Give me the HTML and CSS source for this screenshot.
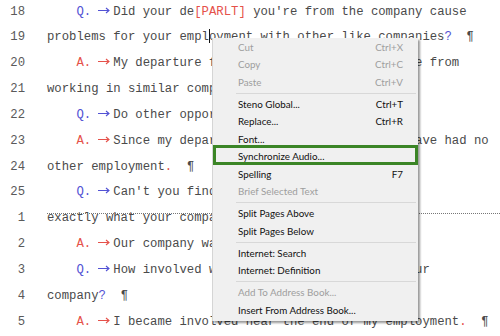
FILE: index.html
```html
<!DOCTYPE html>
<html lang="en">
<head>
    <meta charset="UTF-8">
    <title>Transcript Editor</title>
    <link rel="stylesheet" href="styles.css">
</head>
<body>
    <div class="doc">
        <div class="line"><span class="num">18</span><span class="txt">    <span class="q">Q. <span class="tab"><svg class="arrow" viewBox="0 0 12 7"><path d="M0 3.5h11M8 1l3 2.5-3 2.5"/></svg></span></span>Did your de<span class="red">[PARLT]</span> you're from the company cause</span></div>
        <div class="line"><span class="num">19</span><span class="txt">problems for your empl<span class="caret"></span>oyment with other like companies<span class="q">?</span>  ¶</span></div>
        <div class="line"><span class="num">20</span><span class="txt">    <span class="a">A. <span class="tab"><svg class="arrow" viewBox="0 0 12 7"><path d="M0 3.5h11M8 1l3 2.5-3 2.5"/></svg></span></span>My departure from this company has kept me from</span></div>
        <div class="line"><span class="num">21</span><span class="txt">working in similar companies.</span></div>
        <div class="line"><span class="num">22</span><span class="txt">    <span class="q">Q. <span class="tab"><svg class="arrow" viewBox="0 0 12 7"><path d="M0 3.5h11M8 1l3 2.5-3 2.5"/></svg></span></span>Do other opportunities exist?</span></div>
        <div class="line"><span class="num">23</span><span class="txt">    <span class="a">A. <span class="tab"><svg class="arrow" viewBox="0 0 12 7"><path d="M0 3.5h11M8 1l3 2.5-3 2.5"/></svg></span></span>Since my departure in August of 2019, I have had no</span></div>
        <div class="line"><span class="num">24</span><span class="txt">other employment<span class="red">.</span>  ¶</span></div>
        <div class="line"><span class="num">25</span><span class="txt">    <span class="q">Q. <span class="tab"><svg class="arrow" viewBox="0 0 12 7"><path d="M0 3.5h11M8 1l3 2.5-3 2.5"/></svg></span></span>Can't you find another company that do</span></div>
        <div class="line page-break"><span class="num">1</span><span class="txt">exactly what your company does?</span></div>
        <div class="line"><span class="num">2</span><span class="txt">    <span class="a">A. <span class="tab"><svg class="arrow" viewBox="0 0 12 7"><path d="M0 3.5h11M8 1l3 2.5-3 2.5"/></svg></span></span>Our company was unique.</span></div>
        <div class="line"><span class="num">3</span><span class="txt">    <span class="q">Q. <span class="tab"><svg class="arrow" viewBox="0 0 12 7"><path d="M0 3.5h11M8 1l3 2.5-3 2.5"/></svg></span></span>How involved were you in the hiring at your</span></div>
        <div class="line"><span class="num">4</span><span class="txt">company<span class="q">?</span>  ¶</span></div>
        <div class="line"><span class="num">5</span><span class="txt">    <span class="a">A. <span class="tab"><svg class="arrow" viewBox="0 0 12 7"><path d="M0 3.5h11M8 1l3 2.5-3 2.5"/></svg></span></span>I became involved near the end of my employment<span class="red">.</span>  ¶</span></div>
    </div>

    <div class="menu">
        <div class="item off"><span>Cut</span><span>Ctrl+X</span></div>
        <div class="item off"><span>Copy</span><span>Ctrl+C</span></div>
        <div class="item off"><span>Paste</span><span>Ctrl+V</span></div>
        <div class="sep"></div>
        <div class="item"><span>Steno Global...</span><span>Ctrl+T</span></div>
        <div class="item"><span>Replace...</span><span>Ctrl+R</span></div>
        <div class="item"><span>Font...</span></div>
        <div class="item hl"><span>Synchronize Audio...</span></div>
        <div class="item"><span>Spelling</span><span>F7</span></div>
        <div class="item off"><span>Brief Selected Text</span></div>
        <div class="sep"></div>
        <div class="item"><span>Split Pages Above</span></div>
        <div class="item"><span>Split Pages Below</span></div>
        <div class="sep"></div>
        <div class="item"><span>Internet: Search</span></div>
        <div class="item"><span>Internet: Definition</span></div>
        <div class="sep"></div>
        <div class="item off"><span>Add To Address Book...</span></div>
        <div class="item"><span>Insert From Address Book...</span></div>
    </div>
</body>
</html>
```

FILE: styles.css
```css
html, body {
    margin: 0;
    padding: 0;
    background-color: white;
    overflow: hidden;
}
.doc {
    margin-top: -0.5px;
    font-family: "Liberation Mono", monospace;
    font-size: 12.27px;
    color: #4a4a4a;
}
.line {
    display: flex;
    gap: 22px;
    height: 25.85px;
    line-height: 25.85px;
}
.num {
    width: 25px;
    text-align: right;
    color: #5a5a5a;
    flex: none;
}
.txt {
    white-space: pre;
}
.q {
    color: #5252d4;
}
.a, .red {
    color: #e5514a;
}
.tab {
    display: inline-block;
    width: 2ch;
}
.arrow {
    width: 12px;
    height: 7px;
    vertical-align: 1px;
    margin-left: -0.5px;
    fill: none;
    stroke: currentColor;
    stroke-width: 1.1;
}
.caret {
    display: inline-block;
    width: 1px;
    height: 14px;
    margin-right: -1px;
    vertical-align: -3px;
    background-color: #111;
}
.page-break {
    position: relative;
}
.page-break::before {
    content: "";
    position: absolute;
    left: 47px;
    right: 0;
    top: 6.5px;
    border-top: 1px dotted #777;
}

.menu {
    position: absolute;
    left: 212px;
    top: 38px;
    width: 205px;
    padding: 0 0 2px;
    background-color: #f0f0f0;
    border-left: 1px solid #d5d5d5;
    box-shadow: 2px 2px 2px rgba(0,0,0,0.4);
    font-family: Lato, sans-serif;
    font-size: 9.8px;
    color: #111;
}
.item {
    display: flex;
    justify-content: space-between;
    align-items: center;
    height: 17.5px;
    padding: 0 15px 0 25px;
    position: relative;
}
.item.off {
    color: #9e9e9e;
}
.sep {
    height: 1px;
    margin: 2px 2px 1.5px 23px;
    background-color: #d8d8d8;
}
.hl::after {
    content: "";
    position: absolute;
    left: 0;
    right: 0;
    top: -2.5px;
    bottom: 0;
    border: 3px solid #3b8526;
}
```
